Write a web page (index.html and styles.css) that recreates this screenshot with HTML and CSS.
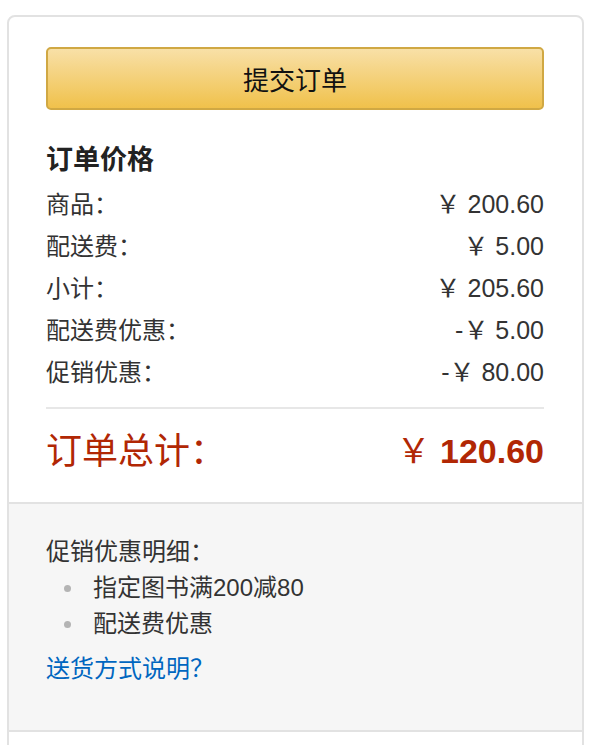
FILE: index.html
```html
<!DOCTYPE html>
<html lang="zh-CN">
<head>
    <meta charset="UTF-8">
    <meta name="viewport" content="width=device-width, initial-scale=1.0">
    <title>订单价格</title>
    <link rel="stylesheet" href="styles.css">
</head>
<body>

    <!-- Bestell-Box -->
    <div class="box">

        <!-- Preisübersicht -->
        <div class="box-inner">
            <button class="btn-submit" type="button">提交订单</button>

            <h3 class="summary-title">订单价格</h3>

            <div class="summary-row"><span>商品：</span><span class="price">￥ 200.60</span></div>
            <div class="summary-row"><span>配送费：</span><span class="price">￥ 5.00</span></div>
            <div class="summary-row"><span>小计：</span><span class="price">￥ 205.60</span></div>
            <div class="summary-row"><span>配送费优惠：</span><span class="price">-￥ 5.00</span></div>
            <div class="summary-row"><span>促销优惠：</span><span class="price">-￥ 80.00</span></div>

            <hr class="divider">

            <div class="summary-row total">
                <span class="total-label">订单总计：</span>
                <span class="price"><span class="yen">￥</span> <b>120.60</b></span>
            </div>
        </div>

        <!-- Promotionen -->
        <div class="box-inner promo">
            <div>促销优惠明细：</div>
            <ul class="promo-list">
                <li>指定图书满200减80</li>
                <li>配送费优惠</li>
            </ul>
            <a class="help-link" href="#">送货方式说明？</a>
        </div>

        <div class="box-inner box-foot"></div>
    </div>

</body>
</html>
```

FILE: styles.css
```css
body {
    font-family: 'Liberation Sans', 'Noto Sans CJK SC', sans-serif;
    background-color: #ffffff;
    color: #333;
    margin: 0;
    padding: 0;
}
.box {
    width: 577px;
    box-sizing: border-box;
    margin: 15px 0 0 7px;
    border: 2px solid #e2e2e2;
    border-radius: 8px 8px 0 0;
}
.box-inner {
    padding: 30px 38px 29px 37px;
}
.btn-submit {
    display: block;
    width: 100%;
    height: 63px;
    border: 2px solid #d0a843;
    border-radius: 5px;
    background: linear-gradient(to bottom, #f8e0a7, #f0c14b);
    font-family: 'Noto Sans CJK SC', sans-serif;
    font-size: 26px;
    color: #111;
    cursor: pointer;
}
.summary-title {
    margin: 29px 0 0 0;
    font-size: 27px;
    line-height: 42px;
    font-weight: bold;
    color: #222;
}
.summary-row {
    display: flex;
    justify-content: space-between;
    align-items: center;
    height: 42px;
    font-size: 24px;
}
.summary-row .price {
    font-size: 25px;
}
.divider {
    border: none;
    border-top: 2px solid #e7e7e7;
    margin: 16px 0 14px 0;
}
.summary-row.total {
    height: 50px;
    color: #b12704;
}
.summary-row .total-label {
    font-size: 36px;
}
.summary-row.total .price {
    font-size: 34px;
}
.promo {
    background-color: #f6f6f6;
    border-top: 2px solid #e2e2e2;
    border-bottom: 2px solid #e2e2e2;
    font-size: 24px;
    line-height: 36px;
    padding-bottom: 43px;
}
.promo-list {
    list-style: none;
    margin: 0;
    padding: 0;
}
.promo-list li {
    display: flex;
    align-items: center;
}
.promo-list li::before {
    content: "";
    width: 7px;
    height: 7px;
    border-radius: 50%;
    background-color: #b4b4b4;
    margin: 0 22px 0 18px;
}
.help-link {
    display: inline-block;
    margin-top: 9px;
    color: #0066c0;
    text-decoration: none;
}
.box-foot {
    height: 20px;
    padding: 0;
}
```
